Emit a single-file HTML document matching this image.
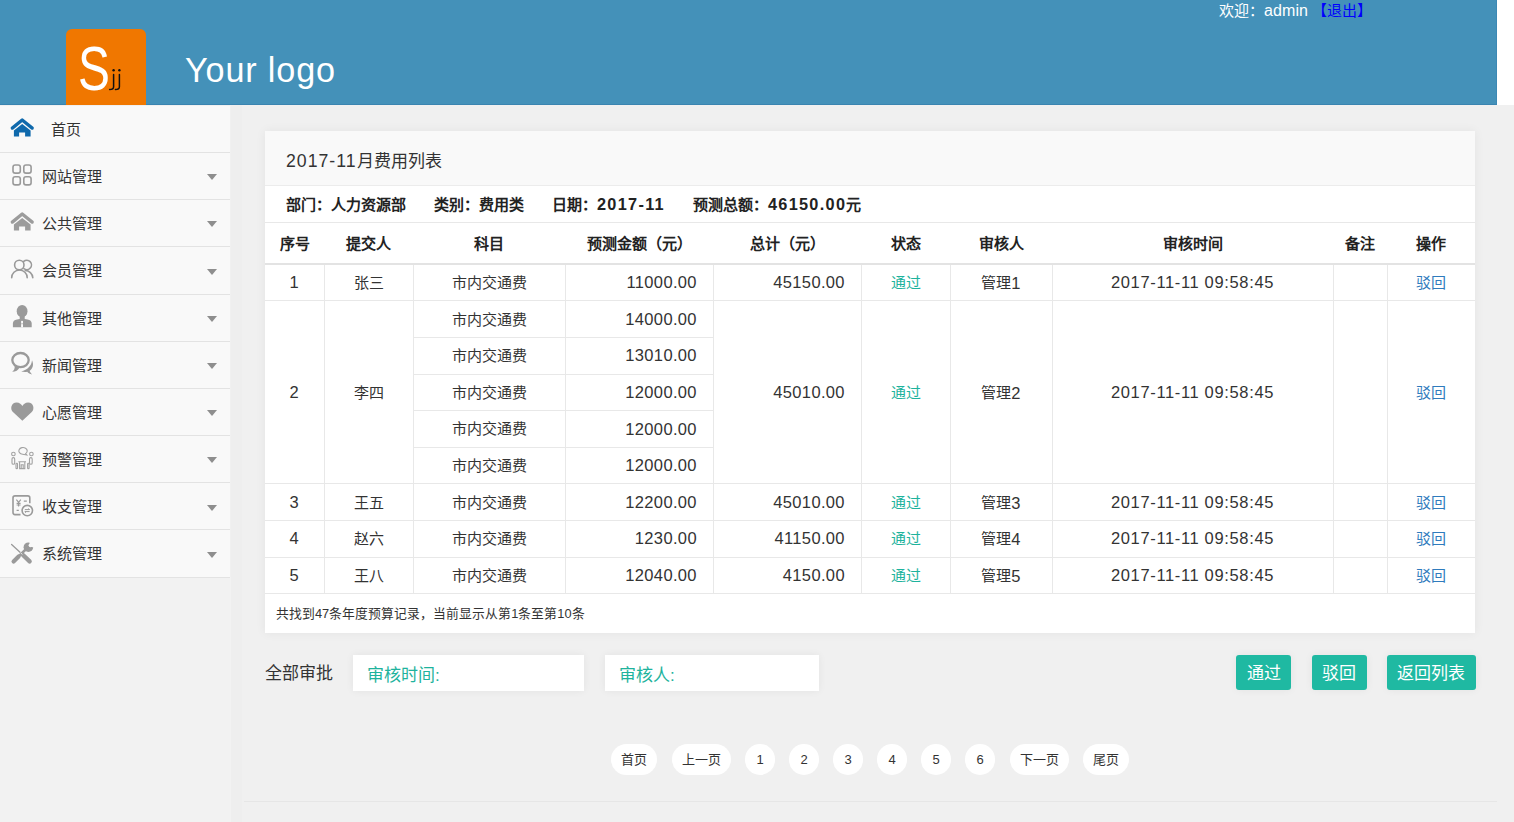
<!DOCTYPE html>
<html lang="zh-CN"><head><meta charset="utf-8">
<style>
*{box-sizing:border-box;margin:0;padding:0}
html,body{width:1514px;height:822px;overflow:hidden}
body{background:#f0f0f0;font-family:"Liberation Sans",sans-serif;color:#333;position:relative}
.abs{position:absolute}
#hdr{left:0;top:0;width:1497px;height:105px;background:#4491b9;border-bottom:1px solid #3a84b0;border-right:1px solid #3c88b4}
#hdrw{left:1497px;top:0;width:17px;height:105px;background:#fff}
#logo{left:66px;top:29px;width:80px;height:76px;background:#f07700;border-radius:6px 6px 0 0}
#logoS{left:77.5px;top:37px;font-size:63px;color:#fff;line-height:63px;transform:scaleX(0.76);transform-origin:0 0}
#logoj{left:109px;top:62px;font-size:22px;color:#111;line-height:22px}
#ylogo{left:185px;top:48.3px;font-size:34.2px;letter-spacing:0.86px;color:#fff;line-height:44px}
#welcome{left:1219px;top:1px;font-size:15px;color:#fff;line-height:20px;white-space:nowrap}
#welcome span{color:#0000ff}
#side{left:0;top:105.8px;width:230px;background:#f9f9f9}
.mi{height:47.2px;border-bottom:1px solid #e3e3e3;position:relative;font-size:15px;color:#333}
.mi .t{position:absolute;left:42px;top:14px;line-height:20px}
.mi .ic{position:absolute;left:11px;top:11px;width:24px;height:24px}
.mi .ar{position:absolute;left:207px;top:21.3px;width:0;height:0;border-left:5px solid transparent;border-right:5px solid transparent;border-top:6px solid #8e8e8e}
#strip{left:231px;top:105px;width:11px;height:717px;background:#eeeeee}
#sidebot{left:0;top:577px;width:231px;height:245px;background:#f2f2f2}
#card{left:265px;top:131.4px;width:1210px;height:502px;background:#fff;box-shadow:0 0 10px rgba(0,0,0,.06)}
#ctitle{height:55px;background:#f9f9f9;border-bottom:1px solid #ececec;font-size:17px;padding:20px 0 0 21px;line-height:20px;color:#333}
#info{height:37px;border-bottom:1px solid #e8e8e8;font-size:15px;font-weight:bold;padding:8px 0 0 21px;line-height:20px;color:#222;white-space:nowrap}
#info b{margin-right:28px}
table{border-collapse:collapse;border-left:hidden;border-right:hidden;table-layout:fixed;width:1210px;font-size:15px;color:#333}
th{height:41px;padding-bottom:2px;font-weight:bold;border-bottom:2px solid #e3e3e3;color:#222;text-align:center}
td{height:36.6px;border:1px solid #e8e8e8;text-align:center;padding:0 0 2.5px 0}
td.r{text-align:right;padding-right:15.6px}
.n{font-size:16.5px;letter-spacing:0.35px;position:relative;top:1.2px}
.dt{letter-spacing:0.65px}
.nb{font-size:16.3px;letter-spacing:1.3px}
.g{color:#1eb39d}
.bl{color:#2f7bbd}
#foot{left:11px;top:474px;font-size:12.8px;color:#333;line-height:18px;white-space:nowrap}
#allap{left:265px;top:663px;font-size:17px;color:#333;line-height:22px}
.inp{background:#fff;height:36px;box-shadow:0 0 8px rgba(0,0,0,.06);font-size:17px;color:#1eb39d;line-height:22px;padding:10px 0 0 14px}
.btn{background:#1fb9a2;color:#fff;font-size:17px;height:35px;line-height:22px;border-radius:3px;text-align:center;padding-top:8px;box-shadow:0 0 8px rgba(0,0,0,.06)}
.pg{background:#fff;height:31px;border-radius:16px;font-size:13px;color:#333;text-align:center;line-height:31px}
#botline{left:244px;top:801px;width:1253px;height:1px;background:#e6e6e6}
</style></head><body>
<div id="hdr" class="abs"></div>
<div id="hdrw" class="abs"></div>
<div id="logo" class="abs"></div>
<div id="logoS" class="abs">S</div>
<svg class="abs" style="left:100px;top:60px" width="30" height="40" viewBox="100 60 30 40" fill="none" stroke="#111" stroke-width="1.5" stroke-linecap="round"><path d="M113.6,74.6 V86.8 Q113.6,89.6 109.6,89.6"/><path d="M119.4,74.6 V86.8 Q119.4,89.6 115.4,89.6"/><circle cx="113.6" cy="70.3" r="1.2" fill="#111" stroke="none"/><circle cx="119.4" cy="70.3" r="1.2" fill="#111" stroke="none"/></svg>
<div id="ylogo" class="abs">Your logo</div>
<div id="welcome" class="abs">欢迎：<i style="font-style:normal;font-size:16px;letter-spacing:0.1px">admin</i> <span>【退出】</span></div>

<div id="sidebot" class="abs"></div>
<div id="strip" class="abs"></div>
<div id="side" class="abs">
 <div class="mi"><div class="t" style="left:51px">首页</div></div>
 <div class="mi"><div class="t">网站管理</div><div class="ar"></div></div>
 <div class="mi"><div class="t">公共管理</div><div class="ar"></div></div>
 <div class="mi"><div class="t">会员管理</div><div class="ar"></div></div>
 <div class="mi"><div class="t">其他管理</div><div class="ar"></div></div>
 <div class="mi"><div class="t">新闻管理</div><div class="ar"></div></div>
 <div class="mi"><div class="t">心愿管理</div><div class="ar"></div></div>
 <div class="mi"><div class="t">预警管理</div><div class="ar"></div></div>
 <div class="mi"><div class="t">收支管理</div><div class="ar"></div></div>
 <div class="mi"><div class="t">系统管理</div><div class="ar"></div></div>
</div>


<svg class="abs" style="left:8px;top:114px" width="30" height="30" viewBox="0 0 30 30"><polyline points="4.3,14.1 14.2,6 24.2,14.1" fill="none" stroke="#0f69ac" stroke-width="3.3" stroke-linecap="round" stroke-linejoin="round"/><path d="M5.9,16.6 L14.2,9.9 L22.6,16.6 V22.6 H17.1 V18.4 H11.1 V22.6 H5.9 Z" fill="#0f69ac"/></svg>
<svg class="abs" style="left:8px;top:160px" width="30" height="30" viewBox="0 0 30 30" fill="none" stroke="#9a9a9a" stroke-width="1.6"><rect x="5" y="5" width="7.3" height="8.1" rx="2.2"/><rect x="15.8" y="5" width="7.3" height="8.1" rx="2.2"/><rect x="5" y="16.8" width="7.3" height="8.1" rx="2.2"/><rect x="15.8" y="16.8" width="7.3" height="8.1" rx="2.2"/></svg>
<svg class="abs" style="left:8px;top:207.7px" width="30" height="30" viewBox="0 0 30 30"><polyline points="4.3,14.1 14.2,6 24.2,14.1" fill="none" stroke="#9c9c9c" stroke-width="3.3" stroke-linecap="round" stroke-linejoin="round"/><path d="M5.9,16.6 L14.2,9.9 L22.6,16.6 V22.6 H17.1 V18.4 H11.1 V22.6 H5.9 Z" fill="#9c9c9c"/></svg>
<svg class="abs" style="left:8px;top:254px" width="30" height="30" viewBox="0 0 30 30" fill="none" stroke="#9a9a9a" stroke-width="1.6" stroke-linecap="round"><circle cx="11.3" cy="11" r="4.7"/><path d="M15.7,7.4 A4.7,4.7 0 1 1 15.9,14.7"/><path d="M3.7,23.7 A7.75,7.75 0 0 1 19.2,23.7"/><path d="M17.2,16.4 A7.9,7.9 0 0 1 24.8,23.7"/></svg>
<svg class="abs" style="left:8px;top:301px" width="30" height="30" viewBox="0 0 30 30"><ellipse cx="14.1" cy="10.2" rx="5.4" ry="6.2" fill="#9a9a9a"/><rect x="11.7" y="14" width="5" height="5" fill="#9a9a9a"/><path d="M4.9,26.3 V22.3 Q5,19 9,18.4 L11.7,18 H16.8 L19.5,18.4 Q23.6,19 23.7,22.3 V26.3 Z" fill="#9a9a9a"/><rect x="13.1" y="19.9" width="1.9" height="6.4" fill="#fafafa"/><rect x="13.1" y="22.4" width="1.9" height="0.8" fill="#b0b0b0"/></svg>
<svg class="abs" style="left:8px;top:348px" width="30" height="30" viewBox="0 0 30 30" fill="#9a9a9a"><ellipse cx="12.5" cy="12.1" rx="8.2" ry="7.1" fill="none" stroke="#9a9a9a" stroke-width="2.3"/><path d="M6.6,17.8 Q7.2,21.6 4.2,23.8 Q9.5,23.8 11.6,19.6 Z"/><path d="M24,12.3 C26.2,17 24.6,20.8 21.6,22.8 C22.2,24.4 23.2,25.6 24.2,26.4 C22,26.2 20.3,25.2 19.2,23.8 C17.2,24.1 15.2,24 13.2,23.5 C19.5,21.8 23.6,18 24,12.3 Z"/></svg>
<svg class="abs" style="left:8px;top:398px" width="30" height="30" viewBox="0 0 30 30"><path d="M14.35,22.8 L5.2,14.3 C1.6,10.8 3.2,4.4 8.6,4.4 C11.6,4.4 13.4,6.4 14.35,7.9 C15.3,6.4 17.1,4.4 20.1,4.4 C25.5,4.4 27.1,10.8 23.5,14.3 Z" fill="#9a9a9a"/></svg>
<svg class="abs" style="left:8px;top:443px" width="30" height="30" viewBox="0 0 30 30" fill="none" stroke="#a2a2a2" stroke-width="1.1"><path d="M17.6,10.6 A4.2,3.4 0 1 0 14.6,11.3 L18.8,12 Z"/><circle cx="5.4" cy="11" r="1.8"/><circle cx="23.4" cy="11" r="1.8"/><rect x="4" y="14.6" width="2.7" height="6.6" rx="1.3"/><rect x="21.5" y="14.6" width="2.7" height="6.6" rx="1.3"/><rect x="8" y="20.2" width="1.5" height="5.4" rx="0.7"/><rect x="19.6" y="20.2" width="1.5" height="5.4" rx="0.7"/><path d="M10.4,18.7 H18 M11.6,18.7 V25.6 H16.8 V18.7 M13.2,25.6 V21.8 H15.2 V25.6"/></svg>
<svg class="abs" style="left:8px;top:490px" width="30" height="30" viewBox="0 0 30 30" fill="none" stroke="#9a9a9a" stroke-width="1.6"><path d="M12.5,24.6 H7 Q5,24.6 5,22.6 V7.9 Q5,5.9 7,5.9 H19.8 Q21.8,5.9 21.8,7.9 V13.2"/><circle cx="19.3" cy="20.6" r="5.2"/><path d="M8.4,9.6 L10.6,12.4 L12.8,9.6 M10.6,12.4 V16.6 M8.6,13.4 H12.6 M8.6,15 H12.6 M15.8,11.1 H18.8 M8.6,20.4 H10.8" stroke-width="1.1"/><path d="M16.8,19.6 H21.6 L20.4,18.5 M21.6,21.6 H16.8 L18,22.7" stroke-width="1"/></svg>
<svg class="abs" style="left:8px;top:538px" width="30" height="30" viewBox="0 0 30 30"><g stroke="#9a9a9a" stroke-linecap="round" fill="none"><line x1="3.6" y1="6.4" x2="13.4" y2="15.4" stroke-width="1.3"/><line x1="15" y1="17" x2="21.6" y2="23.4" stroke-width="4.4"/><line x1="5.6" y1="23.4" x2="10.6" y2="18.4" stroke-width="4.2"/><line x1="10.6" y1="18.4" x2="17.4" y2="11.8" stroke-width="2.6"/></g><circle cx="20.4" cy="9.2" r="4.8" fill="#9a9a9a"/><path d="M21.4,3.6 L27,3.2 L26.4,10 L22.2,8.2 Z" fill="#f9f9f9"/><circle cx="22.6" cy="7.2" r="2" fill="#f9f9f9"/><line x1="12.4" y1="14.6" x2="14.4" y2="16.4" stroke="#f9f9f9" stroke-width="0.8"/></svg>

<div id="card" class="abs">
 <div id="ctitle"><span style="font-size:17.7px;letter-spacing:1px">2017-11</span>月费用列表</div>
 <div id="info"><b>部门：人力资源部</b><b>类别：费用类</b><b>日期：<span class="nb">2017-11</span></b><b>预测总额：<span class="nb">46150.00</span>元</b></div>
 <table>
  <colgroup><col style="width:59px"><col style="width:89px"><col style="width:152px"><col style="width:148px"><col style="width:148px"><col style="width:89px"><col style="width:102px"><col style="width:281px"><col style="width:54px"><col style="width:88px"></colgroup>
  <tr><th>序号</th><th>提交人</th><th>科目</th><th>预测金额（元）</th><th>总计（元）</th><th>状态</th><th>审核人</th><th>审核时间</th><th>备注</th><th>操作</th></tr>
  <tr><td><span class="n">1</span></td><td>张三</td><td>市内交通费</td><td class="r"><span class="n">11000.00</span></td><td class="r"><span class="n">45150.00</span></td><td class="g">通过</td><td>管理<span class="n">1</span></td><td><span class="n dt">2017-11-11 09:58:45</span></td><td></td><td class="bl">驳回</td></tr>
  <tr><td rowspan="5"><span class="n">2</span></td><td rowspan="5">李四</td><td>市内交通费</td><td class="r"><span class="n">14000.00</span></td><td rowspan="5" class="r"><span class="n">45010.00</span></td><td rowspan="5" class="g">通过</td><td rowspan="5">管理<span class="n">2</span></td><td rowspan="5"><span class="n dt">2017-11-11 09:58:45</span></td><td rowspan="5"></td><td rowspan="5" class="bl">驳回</td></tr>
  <tr><td>市内交通费</td><td class="r"><span class="n">13010.00</span></td></tr>
  <tr><td>市内交通费</td><td class="r"><span class="n">12000.00</span></td></tr>
  <tr><td>市内交通费</td><td class="r"><span class="n">12000.00</span></td></tr>
  <tr><td>市内交通费</td><td class="r"><span class="n">12000.00</span></td></tr>
  <tr><td><span class="n">3</span></td><td>王五</td><td>市内交通费</td><td class="r"><span class="n">12200.00</span></td><td class="r"><span class="n">45010.00</span></td><td class="g">通过</td><td>管理<span class="n">3</span></td><td><span class="n dt">2017-11-11 09:58:45</span></td><td></td><td class="bl">驳回</td></tr>
  <tr><td><span class="n">4</span></td><td>赵六</td><td>市内交通费</td><td class="r"><span class="n">1230.00</span></td><td class="r"><span class="n">41150.00</span></td><td class="g">通过</td><td>管理<span class="n">4</span></td><td><span class="n dt">2017-11-11 09:58:45</span></td><td></td><td class="bl">驳回</td></tr>
  <tr><td><span class="n">5</span></td><td>王八</td><td>市内交通费</td><td class="r"><span class="n">12040.00</span></td><td class="r"><span class="n">4150.00</span></td><td class="g">通过</td><td>管理<span class="n">5</span></td><td><span class="n dt">2017-11-11 09:58:45</span></td><td></td><td class="bl">驳回</td></tr>
 </table>
 <div id="foot" class="abs">共找到47条年度预算记录，当前显示从第1条至第10条</div>
</div>

<div id="allap" class="abs">全部审批</div>
<div class="abs inp" style="left:353px;top:654.5px;width:231px">审核时间:</div>
<div class="abs inp" style="left:605px;top:654.5px;width:214px">审核人:</div>
<div class="abs btn" style="left:1236px;top:654.5px;width:55px">通过</div>
<div class="abs btn" style="left:1312px;top:654.5px;width:54.5px">驳回</div>
<div class="abs btn" style="left:1387px;top:654.5px;width:88.5px">返回列表</div>

<div class="abs pg" style="left:611px;top:744px;width:46px">首页</div>
<div class="abs pg" style="left:672px;top:744px;width:59px">上一页</div>
<div class="abs pg" style="left:745px;top:744px;width:30px">1</div>
<div class="abs pg" style="left:789px;top:744px;width:30px">2</div>
<div class="abs pg" style="left:833px;top:744px;width:30px">3</div>
<div class="abs pg" style="left:877px;top:744px;width:30px">4</div>
<div class="abs pg" style="left:921px;top:744px;width:30px">5</div>
<div class="abs pg" style="left:965px;top:744px;width:30px">6</div>
<div class="abs pg" style="left:1010px;top:744px;width:59px">下一页</div>
<div class="abs pg" style="left:1083px;top:744px;width:46px">尾页</div>
<div id="botline" class="abs"></div>
</body></html>
